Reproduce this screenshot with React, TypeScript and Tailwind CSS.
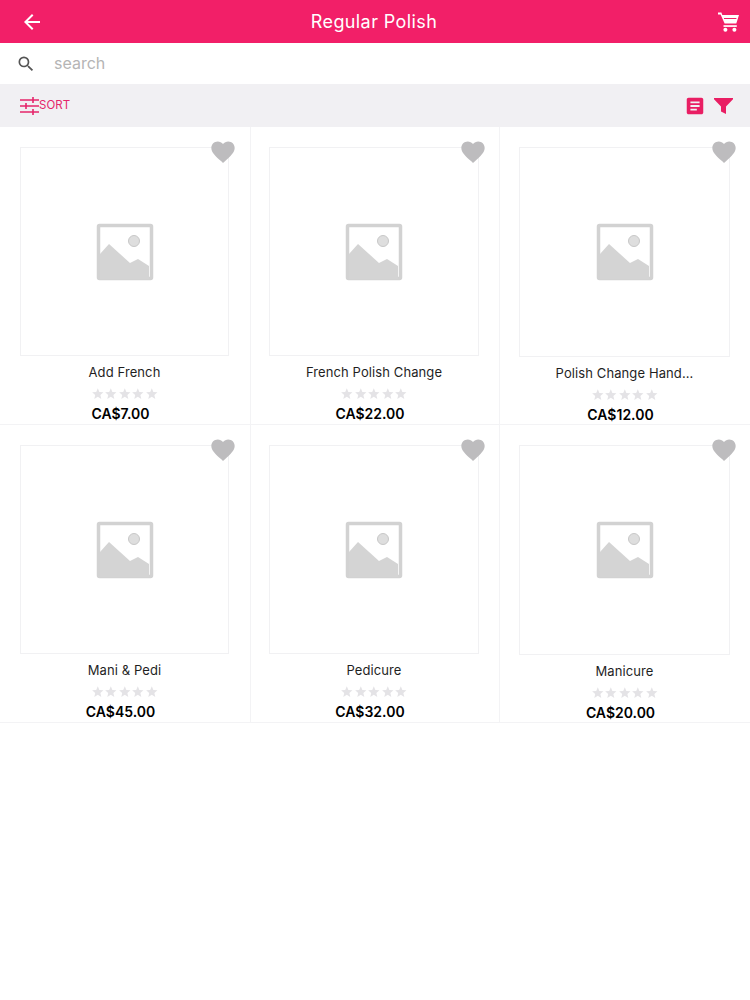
import { MdArrowBack, MdArticle, MdFavorite, MdSearch, MdStar } from 'react-icons/md';

type Product = { name: string; price: string };

const PRODUCTS: Product[] = [
  { name: 'Add French', price: 'CA$7.00' },
  { name: 'French Polish Change', price: 'CA$22.00' },
  { name: 'Polish Change Hand...', price: 'CA$12.00' },
  { name: 'Mani & Pedi', price: 'CA$45.00' },
  { name: 'Pedicure', price: 'CA$32.00' },
  { name: 'Manicure', price: 'CA$20.00' },
];

const COLUMN_CLASS = ['border-r pl-[20px] pr-[21px]', 'border-r pl-[18px] pr-[20px]', 'pl-[19px] pr-[20px]'];
const BOX_CLASS = ['h-[209px]', 'h-[209px]', 'h-[210px]'];

function CartIcon() {
  return (
    <svg viewBox="0 0 21 20" className="h-[20px] w-[21px]" fill="#fff">
      <path d="M0 .5h3.4l.9 2.5H21l-2.7 8.4H6.6L2.6 2.4H0z" />
      <path d="M5.5 13.2h13.3v1.7H5.5z" />
      <path d="M6 6h12.4v1H6z" fill="#f21f68" />
      <circle cx="7.4" cy="17.8" r="2" />
      <circle cx="16.4" cy="17.8" r="2" />
    </svg>
  );
}

function SortIcon() {
  return (
    <svg viewBox="0 0 19 18" className="h-[18px] w-[19px]" fill="none" stroke="#e5266b" strokeWidth="1.6">
      <path d="M0 3h19M0 9h19M0 15h19" />
      <path d="M13 0v6M6 6v6M13 12v6" />
    </svg>
  );
}

function FilterIcon() {
  return (
    <svg viewBox="0 0 19 16" className="h-[16px] w-[19px]" fill="#e91e63">
      <path d="M0 0h19v1.2L12 8.4V16l-5-2.6V8.4L0 1.2z" />
    </svg>
  );
}

function Placeholder() {
  return (
    <svg viewBox="0 0 58 58" className="h-[58px] w-[58px]">
      <rect x="2.5" y="2.5" width="53" height="53" rx="1" fill="#fff" stroke="#d2d2d2" strokeWidth="3.5" />
      <path d="M4 31l9-10 21 19 8-4 11 7v13H4z" fill="#d4d4d4" />
      <circle cx="38" cy="18" r="5.5" fill="#dedede" stroke="#c8c8c8" />
    </svg>
  );
}

function ProductCard({ product, index }: { product: Product; index: number }) {
  return (
    <div className={`border-b border-[#f3f3f5] pt-[20px] ${COLUMN_CLASS[index % 3]}`}>
      <div className="relative">
        <div className={`flex w-full items-center justify-center border border-[#f1f1f3] ${BOX_CLASS[index % 3]}`}>
          <Placeholder />
        </div>
        <MdFavorite className="absolute -top-[9px] -right-[8px] h-[28px] w-[28px] text-[#bdbcbe]" />
      </div>
      <p className="mt-[7px] truncate text-center text-[13px] leading-[18px] tracking-[0.1px] text-[#1f1f1f]">
        {product.name}
      </p>
      <div className="mt-[6px] flex h-[13px] justify-center">
        {[0, 1, 2, 3, 4].map((i) => (
          <MdStar key={i} className="h-[13.6px] w-[13.6px] text-[#e4e3e6]" />
        ))}
      </div>
      <p className="mt-[5px] pr-[8px] text-center text-[14px] font-semibold leading-[18px] text-black">
        {product.price}
      </p>
    </div>
  );
}

export default function App() {
  return (
    <main className="min-h-screen bg-white font-['Inter',sans-serif]">
      <header className="flex h-[43px] items-center bg-[#f21f68] pr-[11px] pl-[20px] text-white">
        <MdArrowBack className="h-[24px] w-[24px]" />
        <h1 className="flex-1 pr-[14px] text-center text-[18px] tracking-[0.4px]">Regular Polish</h1>
        <CartIcon />
      </header>

      <div className="flex h-[41px] items-center gap-[18px] pb-[2px] pl-[16px]">
        <MdSearch className="mt-[2px] h-[20px] w-[20px] text-[#555]" />
        <span className="text-[16px] text-[#b5b5b5]">search</span>
      </div>

      <div className="flex h-[43px] items-center justify-between bg-[#f1f0f3] pr-[17px] pl-[20px]">
        <div className="flex items-center text-[11.5px] tracking-[0.1px] text-[#e5266b]">
          <SortIcon />
          <span>SORT</span>
        </div>
        <div className="flex items-center gap-[8px] text-[#e91e63]">
          <MdArticle className="h-[22px] w-[22px]" />
          <FilterIcon />
        </div>
      </div>

      <section className="grid auto-rows-[298px] grid-cols-[251px_249px_250px]">
        {PRODUCTS.map((product, index) => (
          <ProductCard key={product.name} product={product} index={index} />
        ))}
      </section>
    </main>
  );
}
